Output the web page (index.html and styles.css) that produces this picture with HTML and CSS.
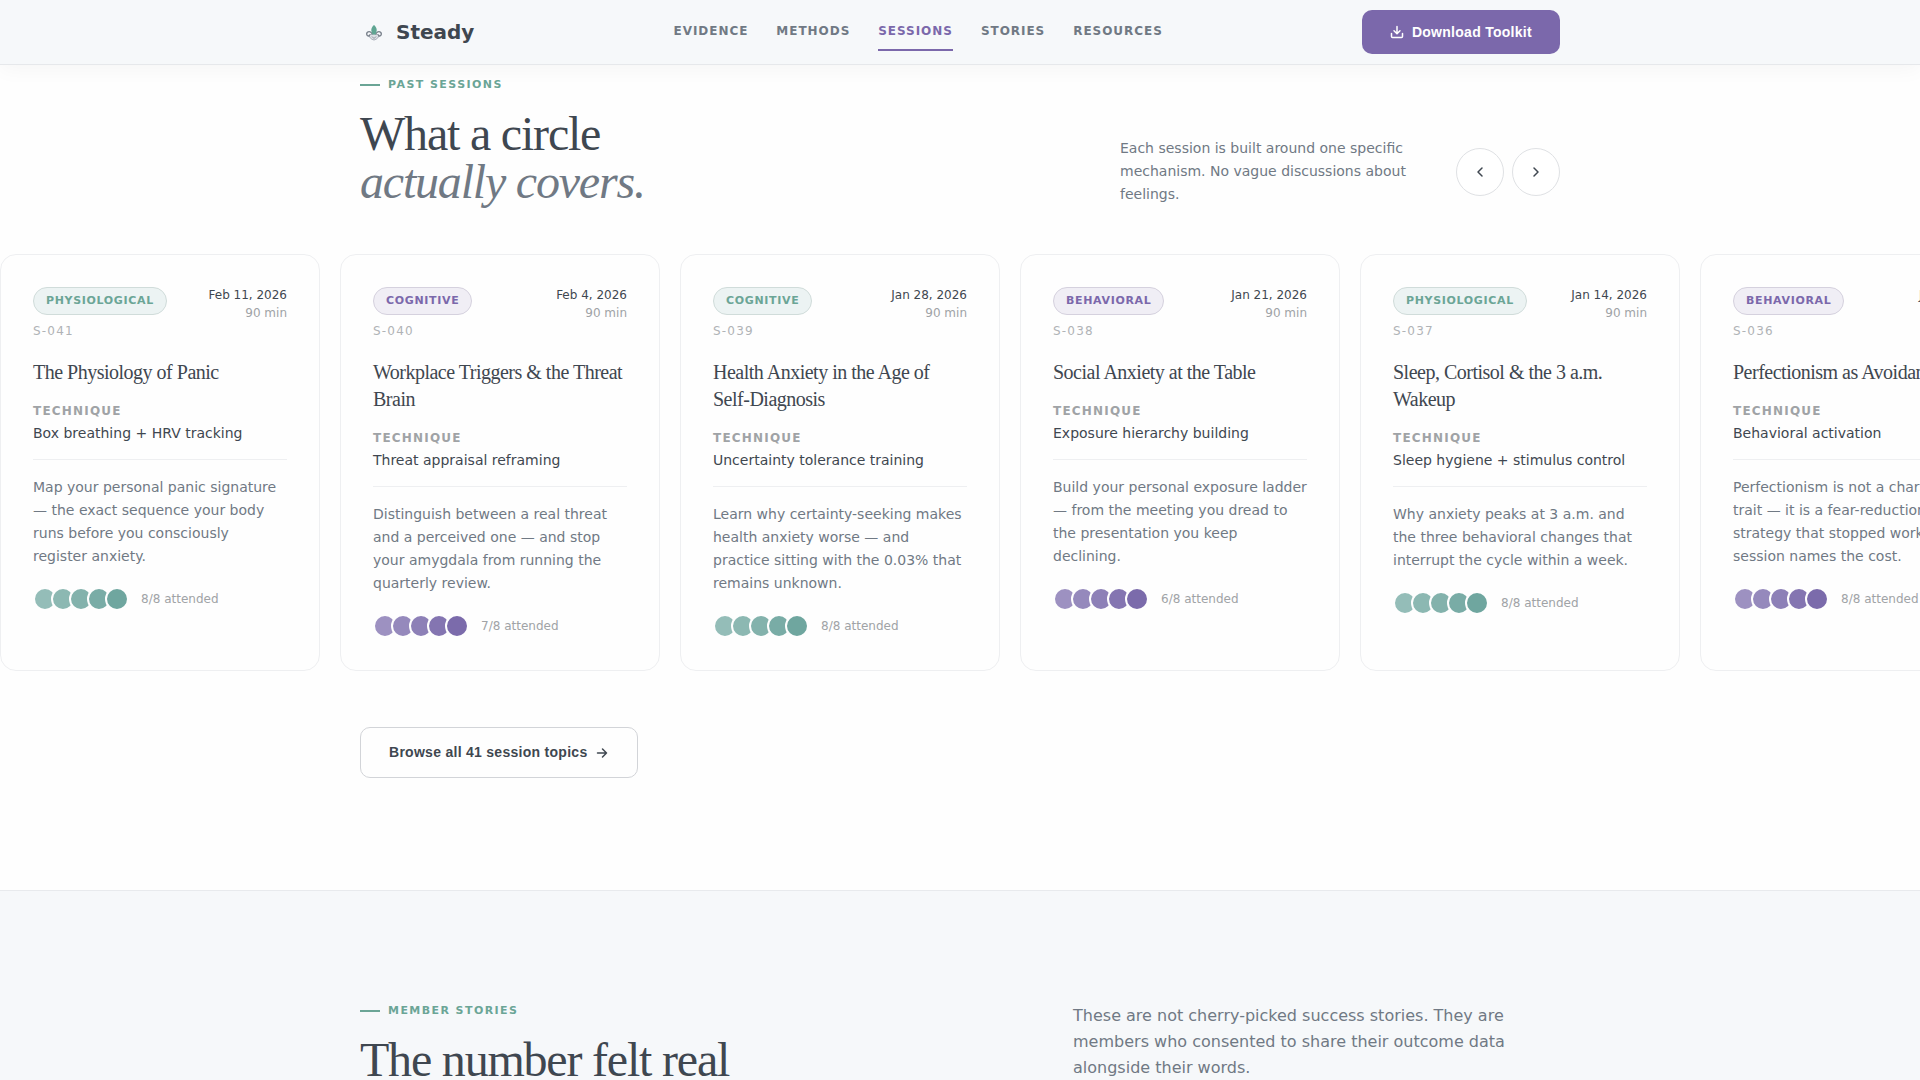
FILE: index.html
```html
<!DOCTYPE html>
<html lang="en">
  <head>
    <meta charset="UTF-8" />
    <meta name="viewport" content="width=device-width, initial-scale=1" />
    <title>Steady</title>
    <link rel="stylesheet" href="styles.css">
  </head>
  <body>
    <header class="site-header">
      <div class="container header-inner">
        <a class="logo" href="#">
          <svg class="logo-mark" viewBox="0 0 28 28" aria-hidden="true">
            <path d="M9 17c.2 2.500 2.300 4.500 5 5 2.700-.5 4.800-2.500 5-5l-3-1h-4z" fill="#dde1e6" stroke="#a9aeb8" />
            <path d="M12.500 16.500c-1-2.500-3.500-3.800-5.300-2-1 1.300-.5 3.300 1 3.500 1 .1 1.500-.6 1.400-1.300M15.500 16.500c1-2.500 3.500-3.800 5.300-2 1 1.300.5 3.300-1 3.500-1 .1-1.500-.6-1.400-1.300" fill="none" stroke="#7b838d" stroke-width="1.400" />
            <path d="M14 7c3.300 3 3.300 5.500 1.500 9.500h-3C10.700 12.500 10.700 10 14 7z" fill="#5fa592" />
            <path d="M12 18.500l2 2 2-2" fill="none" stroke="#8e949e" />
          </svg>
          <span>Steady</span>
        </a>
        <nav class="site-nav" aria-label="Main">
          <a href="#evidence">Evidence</a>
          <a href="#methods">Methods</a>
          <a class="active" href="#sessions">Sessions</a>
          <a href="#stories">Stories</a>
          <a href="#resources">Resources</a>
        </nav>
        <button class="btn btn-primary" type="button">
          <svg class="icon" viewBox="0 0 14 14" aria-hidden="true">
            <path d="M7 1.500v7M4 5.800l3 3 3-3M1.500 8.500v3a1 1 0 0 0 1 1h9a1 1 0 0 0 1-1v-3" />
          </svg>
          Download Toolkit
        </button>
      </div>
    </header>

    <main>
      <section class="sessions" id="sessions">
        <div class="container sessions-head">
          <div>
            <p class="eyebrow">Past sessions</p>
            <h2 class="title">What a circle<br /><em>actually covers.</em></h2>
          </div>
          <div class="sessions-side">
            <p class="sessions-note">
              Each session is built around one specific mechanism. No vague
              discussions about feelings.
            </p>
            <div class="arrows">
              <button class="arrow" type="button" aria-label="Previous sessions">
                <svg class="icon" viewBox="0 0 14 14" aria-hidden="true"><path d="M9 3L5 7l4 4" /></svg>
              </button>
              <button class="arrow" type="button" aria-label="Next sessions">
                <svg class="icon" viewBox="0 0 14 14" aria-hidden="true"><path d="M5 3l4 4-4 4" /></svg>
              </button>
            </div>
          </div>
        </div>

        <div class="track">
          <article class="card sage">
            <div class="card-top">
              <div>
                <span class="badge">Physiological</span>
                <p class="card-id">S-041</p>
              </div>
              <p class="card-date">Feb 11, 2026<span>90 min</span></p>
            </div>
            <h3 class="card-title">The Physiology of Panic</h3>
            <div class="technique">
              <p class="technique-label">Technique</p>
              <p>Box breathing + HRV tracking</p>
            </div>
            <p class="card-text">
              Map your personal panic signature — the exact sequence your body
              runs before you consciously register anxiety.
            </p>
            <div class="attended">
              <div class="dots"><i></i><i></i><i></i><i></i><i></i></div>
              <span>8/8 attended</span>
            </div>
          </article>

          <article class="card violet">
            <div class="card-top">
              <div>
                <span class="badge">Cognitive</span>
                <p class="card-id">S-040</p>
              </div>
              <p class="card-date">Feb 4, 2026<span>90 min</span></p>
            </div>
            <h3 class="card-title">Workplace Triggers &amp; the Threat Brain</h3>
            <div class="technique">
              <p class="technique-label">Technique</p>
              <p>Threat appraisal reframing</p>
            </div>
            <p class="card-text">
              Distinguish between a real threat and a perceived one — and stop
              your amygdala from running the quarterly review.
            </p>
            <div class="attended">
              <div class="dots"><i></i><i></i><i></i><i></i><i></i></div>
              <span>7/8 attended</span>
            </div>
          </article>

          <article class="card sage">
            <div class="card-top">
              <div>
                <span class="badge">Cognitive</span>
                <p class="card-id">S-039</p>
              </div>
              <p class="card-date">Jan 28, 2026<span>90 min</span></p>
            </div>
            <h3 class="card-title">Health Anxiety in the Age of Self-Diagnosis</h3>
            <div class="technique">
              <p class="technique-label">Technique</p>
              <p>Uncertainty tolerance training</p>
            </div>
            <p class="card-text">
              Learn why certainty-seeking makes health anxiety worse — and
              practice sitting with the 0.03% that remains unknown.
            </p>
            <div class="attended">
              <div class="dots"><i></i><i></i><i></i><i></i><i></i></div>
              <span>8/8 attended</span>
            </div>
          </article>

          <article class="card violet">
            <div class="card-top">
              <div>
                <span class="badge">Behavioral</span>
                <p class="card-id">S-038</p>
              </div>
              <p class="card-date">Jan 21, 2026<span>90 min</span></p>
            </div>
            <h3 class="card-title">Social Anxiety at the Table</h3>
            <div class="technique">
              <p class="technique-label">Technique</p>
              <p>Exposure hierarchy building</p>
            </div>
            <p class="card-text">
              Build your personal exposure ladder — from the meeting you dread
              to the presentation you keep declining.
            </p>
            <div class="attended">
              <div class="dots"><i></i><i></i><i></i><i></i><i></i></div>
              <span>6/8 attended</span>
            </div>
          </article>

          <article class="card sage">
            <div class="card-top">
              <div>
                <span class="badge">Physiological</span>
                <p class="card-id">S-037</p>
              </div>
              <p class="card-date">Jan 14, 2026<span>90 min</span></p>
            </div>
            <h3 class="card-title">Sleep, Cortisol &amp; the 3 a.m. Wakeup</h3>
            <div class="technique">
              <p class="technique-label">Technique</p>
              <p>Sleep hygiene + stimulus control</p>
            </div>
            <p class="card-text">
              Why anxiety peaks at 3 a.m. and the three behavioral changes that
              interrupt the cycle within a week.
            </p>
            <div class="attended">
              <div class="dots"><i></i><i></i><i></i><i></i><i></i></div>
              <span>8/8 attended</span>
            </div>
          </article>

          <article class="card violet">
            <div class="card-top">
              <div>
                <span class="badge">Behavioral</span>
                <p class="card-id">S-036</p>
              </div>
              <p class="card-date">Jan 7, 2026<span>90 min</span></p>
            </div>
            <h3 class="card-title">Perfectionism as Avoidance</h3>
            <div class="technique">
              <p class="technique-label">Technique</p>
              <p>Behavioral activation</p>
            </div>
            <p class="card-text">
              Perfectionism is not a character trait — it is a fear-reduction
              strategy that stopped working. This session names the cost.
            </p>
            <div class="attended">
              <div class="dots"><i></i><i></i><i></i><i></i><i></i></div>
              <span>8/8 attended</span>
            </div>
          </article>
        </div>

        <div class="container">
          <button class="btn btn-outline" type="button">
            Browse all 41 session topics
            <svg class="icon" viewBox="0 0 14 14" aria-hidden="true"><path d="M2.500 7h9M7.500 3l4 4-4 4" /></svg>
          </button>
        </div>
      </section>

      <section class="stories" id="stories">
        <div class="container stories-head">
          <div>
            <p class="eyebrow">Member stories</p>
            <h2 class="title">The number felt real</h2>
          </div>
          <p class="stories-note">
            These are not cherry-picked success stories. They are members who
            consented to share their outcome data alongside their words.
          </p>
        </div>
      </section>
    </main>
  </body>
</html>
```
FILE: styles.css
```css
:root {
  --ink: #3f4750;
  --slate: #707984;
  --muted: #a0a3a6;
  --violet: #7b68ab;
  --sage: #6ba596;
  --line: #eeeff1;
  --mist: #f6f8fa;
}
* {
  box-sizing: border-box;
}
body {
  margin: 0;
  overflow-x: hidden;
  background: #fefefe;
  color: var(--ink);
  font-family: "DejaVu Sans", sans-serif;
  font-size: 14px;
  line-height: 23px;
}
h2,
h3,
p {
  margin: 0;
}
a {
  color: inherit;
  text-decoration: none;
}
.container {
  max-width: 1200px;
  margin: 0 auto;
}
.icon {
  width: 14px;
  height: 14px;
  fill: none;
  stroke: currentColor;
  stroke-width: 1.5;
  stroke-linecap: round;
  stroke-linejoin: round;
}

/* header */
.site-header {
  position: sticky;
  top: 0;
  z-index: 10;
  background: var(--mist);
  border-bottom: 1px solid #e6e8eb;
  box-shadow: 0 4px 20px rgba(0, 0, 0, 0.04);
}
.header-inner {
  display: flex;
  align-items: center;
  justify-content: space-between;
  height: 64px;
}
.logo {
  display: flex;
  align-items: center;
  gap: 8px;
  font-size: 20px;
  font-weight: 700;
}
.logo-mark {
  width: 28px;
  height: 28px;
}
.site-nav {
  display: flex;
  gap: 28px;
  color: var(--slate);
  font-size: 12px;
  font-weight: 700;
  line-height: 18px;
  letter-spacing: 0.08em;
  text-transform: uppercase;
}
.site-nav a {
  padding: 9px 0;
  border-bottom: 2px solid transparent;
}
.site-nav .active {
  color: var(--violet);
  border-color: var(--violet);
}
.btn {
  display: inline-flex;
  align-items: center;
  gap: 8px;
  padding: 14px 28px;
  border: 0;
  border-radius: 10px;
  font: 700 14px/16px "Liberation Sans", Arial, sans-serif;
  letter-spacing: 0.02em;
  cursor: pointer;
}
.btn-primary {
  background: var(--violet);
  color: #fff;
}
.btn-outline {
  padding: 16px 28px;
  background: transparent;
  border: 1px solid #d2d4d8;
  color: var(--ink);
  line-height: 17px;
}

/* shared headings */
.eyebrow {
  display: flex;
  align-items: center;
  gap: 8px;
  margin-bottom: 18px;
  color: var(--sage);
  font-size: 11px;
  font-weight: 700;
  line-height: 15px;
  letter-spacing: 0.13em;
  text-transform: uppercase;
}
.eyebrow::before {
  content: "";
  width: 20px;
  height: 2px;
  background: var(--sage);
}
.title {
  font-family: "Liberation Serif", serif;
  font-size: 48px;
  font-weight: 400;
  line-height: 48px;
  letter-spacing: -0.025em;
}
.title em {
  color: var(--slate);
}

/* sessions */
.sessions {
  padding: 12px 0 112px;
}
.sessions-head {
  display: flex;
  align-items: flex-end;
  justify-content: space-between;
  margin-bottom: 48px;
}
.sessions-side {
  display: flex;
  align-items: center;
  gap: 48px;
}
.sessions-note {
  max-width: 288px;
  color: var(--slate);
}
.arrows {
  display: flex;
  gap: 8px;
}
.arrow {
  display: flex;
  align-items: center;
  justify-content: center;
  width: 48px;
  height: 48px;
  padding: 0;
  background: #fff;
  border: 1px solid #dfe1e4;
  border-radius: 50%;
  color: var(--ink);
  cursor: pointer;
}
.track {
  display: flex;
  gap: 20px;
  margin-bottom: 56px;
  overflow: hidden;
}
.card {
  flex: 0 0 320px;
  padding: 32px;
  border: 1px solid var(--line);
  border-radius: 16px;
}
.sage {
  --tone: #6ba596;
  --tone-bg: #ecf3f3;
  --tone-line: #d0dcda;
  --dot: #6fa69f;
}
.violet {
  --tone: #7b68ab;
  --tone-bg: #f0eef5;
  --tone-line: #d5d1de;
  --dot: #7b6bab;
}
.card-top {
  display: flex;
  align-items: flex-start;
  justify-content: space-between;
  margin-bottom: 19px;
}
.badge {
  display: block;
  padding: 5px 12px;
  background: var(--tone-bg);
  border: 1px solid var(--tone-line);
  border-radius: 14px;
  color: var(--tone);
  font-size: 11px;
  font-weight: 700;
  line-height: 16px;
  letter-spacing: 0.06em;
  text-transform: uppercase;
}
.card-id {
  margin-top: 7px;
  color: #b0b3b6;
  font-size: 12px;
  line-height: 18px;
  letter-spacing: 0.1em;
}
.card-date {
  font-size: 12px;
  line-height: 16px;
  text-align: right;
}
.card-date span {
  display: block;
  margin-top: 2px;
  color: var(--muted);
}
.card-title {
  margin-bottom: 15px;
  font-family: "Liberation Serif", serif;
  font-size: 20px;
  font-weight: 400;
  line-height: 27px;
  letter-spacing: -0.025em;
}
.technique {
  margin-bottom: 16px;
  padding-bottom: 14px;
  border-bottom: 1px solid var(--line);
}
.technique-label {
  color: var(--muted);
  font-size: 12px;
  font-weight: 700;
  line-height: 21px;
  letter-spacing: 0.1em;
  text-transform: uppercase;
}
.card-text {
  margin-bottom: 19px;
  color: var(--slate);
}
.attended {
  display: flex;
  align-items: center;
  gap: 12px;
  color: var(--muted);
  font-size: 12px;
}
.dots {
  display: flex;
}
.dots i {
  width: 24px;
  height: 24px;
  background: var(--dot);
  border: 2px solid #fefefe;
  border-radius: 50%;
}
.dots i + i {
  margin-left: -6px;
}
.dots i:nth-child(1) {
  background: color-mix(in srgb, var(--dot) 74%, white);
}
.dots i:nth-child(2) {
  background: color-mix(in srgb, var(--dot) 80%, white);
}
.dots i:nth-child(3) {
  background: color-mix(in srgb, var(--dot) 86%, white);
}
.dots i:nth-child(4) {
  background: color-mix(in srgb, var(--dot) 93%, white);
}

/* stories */
.stories {
  padding: 112px 0;
  background: var(--mist);
  border-top: 1px solid #e8eaed;
}
.stories-head {
  display: grid;
  grid-template-columns: 1.3fr 1fr;
  gap: 80px;
}
.stories-note {
  color: var(--slate);
  font-size: 16px;
  line-height: 26px;
}
```
